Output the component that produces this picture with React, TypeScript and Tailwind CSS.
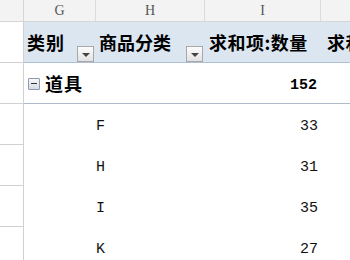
import React from 'react';

const cjk = { fontFamily: '"Noto Sans CJK SC", "Liberation Sans", sans-serif' };
const mono = { fontFamily: '"Liberation Mono", "Noto Sans CJK SC", monospace' };

const FilterButton = () => (
  <div className="absolute right-[2px] bottom-0 w-[17px] h-[16px] border border-[#a8a8a8] bg-gradient-to-b from-[#fcfcfc] to-[#e2e2e2] flex items-center justify-center">
    <svg width="8" height="4" viewBox="0 0 8 4" className="mt-[2px]">
      <path d="M0 0 L8 0 L4 4 Z" fill="#444" />
    </svg>
  </div>
);

const items = [
  { name: 'F', qty: 33 },
  { name: 'H', qty: 31 },
  { name: 'I', qty: 35 },
  { name: 'K', qty: 27 },
];

const App: React.FC = () => {
  return (
    <div className="w-[350px] h-[260px] overflow-hidden bg-white">
      {/* column letters */}
      <div className="flex h-[22px] bg-[#f3f3f3] border-b border-[#d5d5d5] text-[14px] text-[#555]" style={{ fontFamily: '"Liberation Serif", serif' }}>
        <div className="w-[24px] shrink-0 border-r border-[#d5d5d5]" />
        <div className="w-[72px] shrink-0 border-r border-[#dcdcdc] flex items-center justify-center">G</div>
        <div className="w-[109px] shrink-0 border-r border-[#dcdcdc] flex items-center justify-center">H</div>
        <div className="w-[116px] shrink-0 border-r border-[#dcdcdc] flex items-center justify-center">I</div>
        <div className="flex-1" />
      </div>

      {/* pivot header */}
      <div className="flex h-[41px]">
        <div className="w-[24px] shrink-0 border-r border-b border-[#d0d0d0]" />
        <div className="flex-1 flex bg-[#dce6f1] border-b border-[#aebfd4] text-[18px] font-bold text-black whitespace-nowrap" style={cjk}>
          <div className="relative w-[72px] shrink-0 flex items-center pl-[3px] tracking-[1px]">类别<FilterButton /></div>
          <div className="relative w-[109px] shrink-0 flex items-center pl-[3px]">商品分类<FilterButton /></div>
          <div className="w-[116px] shrink-0 flex items-center pl-[4px] tracking-[0.5px]">求和项:数量</div>
          <div className="flex-1 flex items-center pl-[6px] overflow-hidden tracking-[0.5px]">求和项:金额</div>
        </div>
      </div>

      {/* category row */}
      <div className="flex h-[41px]">
        <div className="w-[24px] shrink-0 border-r border-b border-[#d0d0d0]" />
        <div className="flex-1 flex border-b border-[#aebbc9]">
          <div className="w-[181px] shrink-0 flex items-center pl-[4px] gap-[5px]">
            <div className="w-[12px] h-[12px] border border-[#8e9aab] rounded-[1px] bg-gradient-to-b from-[#f7f8fa] to-[#d5dbe3] flex items-center justify-center mt-[1px]">
              <div className="w-[6px] h-[1px] bg-[#333]" />
            </div>
            <span className="text-[18px] font-bold tracking-[1px]" style={cjk}>道具</span>
          </div>
          <div className="w-[116px] shrink-0 flex items-center justify-end pr-[4px] pt-[6px] text-[15px] font-bold" style={mono}>152</div>
          <div className="flex-1" />
        </div>
      </div>

      {/* item rows */}
      {items.map((it) => (
        <div key={it.name} className="flex h-[41px]">
          <div className="w-[24px] shrink-0 border-r border-b border-[#d0d0d0]" />
          <div className="flex-1 flex text-[15px] text-[#111]" style={mono}>
            <div className="w-[72px] shrink-0" />
            <div className="w-[109px] shrink-0 flex items-center pt-[6px]">{it.name}</div>
            <div className="w-[116px] shrink-0 flex items-center justify-end pr-[3px] pt-[6px]">{it.qty}</div>
            <div className="flex-1" />
          </div>
        </div>
      ))}
    </div>
  );
};

export default App;
